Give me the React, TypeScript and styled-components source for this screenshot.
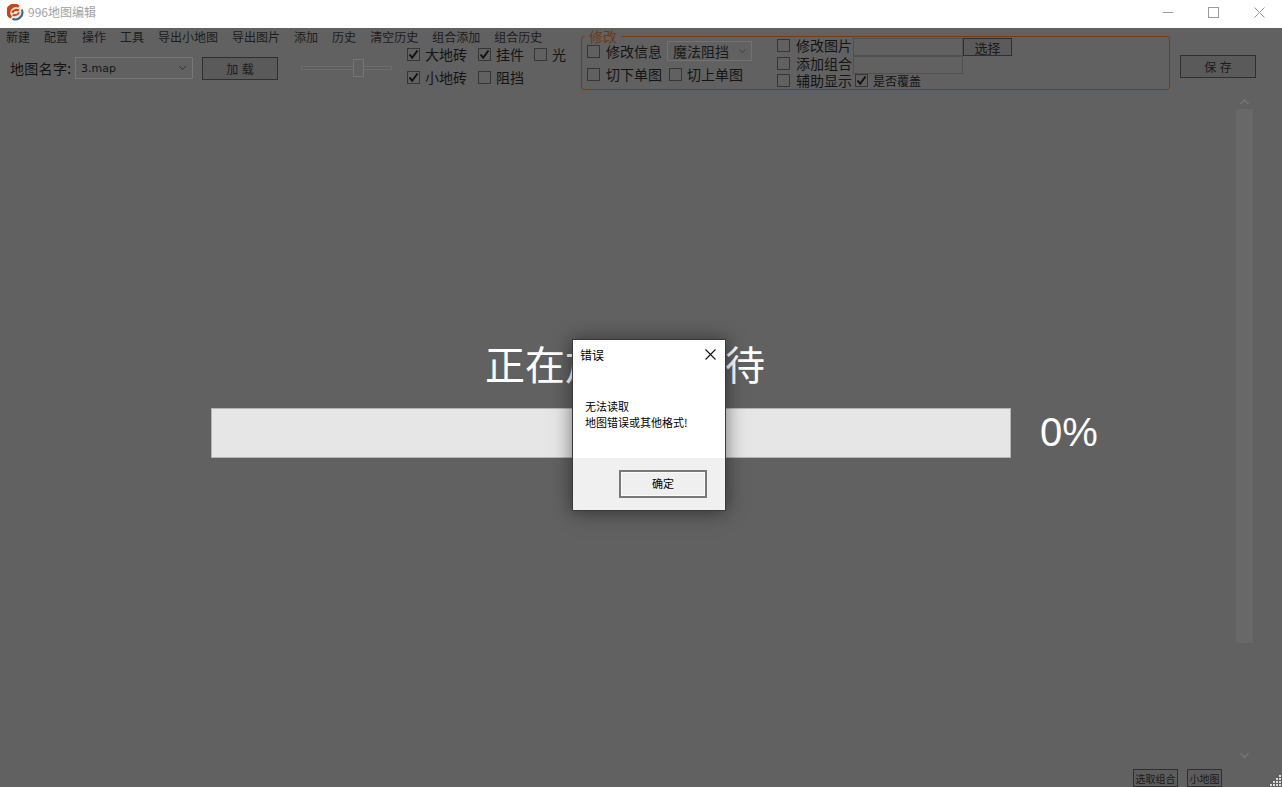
import React from 'react'
import styled, { createGlobalStyle } from 'styled-components'

const GlobalStyle = createGlobalStyle`
html, body {
  margin: 0;
  padding: 0;
  height: 100%;
  overflow: hidden;
}
body {
  font-family: "Noto Sans CJK SC", "Liberation Sans", sans-serif;
  background: #616161;
}
* { box-sizing: border-box; }
`

const menuItems = ['新建', '配置', '操作', '工具', '导出小地图', '导出图片', '添加', '历史', '清空历史', '组合添加', '组合历史']

const Check: React.FC<{ checked?: boolean }> = ({ checked }) => (
  <CheckBox>
    {checked && (
      <svg width="11" height="11" viewBox="0 0 11 11">
        <path d="M1.5 5.5 L4.2 8.7 L9.5 1.5" fill="none" stroke="#111" strokeWidth="1.9" />
      </svg>
    )}
  </CheckBox>
)

const Chevron: React.FC<{ up?: boolean; color?: string; w?: number }> = ({ up, color = '#2c2c2c', w = 7 }) => (
  <svg width={w} height={w * 0.6} viewBox="0 0 10 6" style={{ display: 'block' }}>
    <path d={up ? 'M0.5 5.5 L5 1 L9.5 5.5' : 'M0.5 0.5 L5 5 L9.5 0.5'} fill="none" stroke={color} strokeWidth="1.3" />
  </svg>
)

const App: React.FC = () => {
  return (
    <Page>
      <GlobalStyle />
      <TitleBar>
        <svg width="17" height="17" viewBox="0 0 17 17">
          <circle cx="8.5" cy="8.5" r="8" fill="#f4e6dc" />
          <path d="M12.5 1.6 A8 8 0 1 0 3.4 14.6 L5 12.6 A5.6 5.6 0 0 1 11.4 3.6 Z" fill="#c6451c" />
          <path d="M15.6 5 A8 8 0 0 1 5 15.7 L6 14 A6.2 6.2 0 0 0 14 6 Z" fill="#2f6c96" />
          <path d="M4.2 8.2 C5.2 5.4 9 4 12.6 5.4 L11 7.4 L9.2 7 C7.8 7 7 7.8 6.6 9 Z" fill="#c9481e" />
          <path d="M12.8 8.6 C12 11.6 8.4 13 5 11.6 L6.6 9.8 L8.4 10.2 C9.6 10.2 10.4 9.4 10.8 8.2 Z" fill="#c9481e" />
        </svg>
        <AppTitle>996地图编辑</AppTitle>
        <WindowButtons>
          <svg width="10" height="11" viewBox="0 0 10 11">
            <path d="M0 5.5 H10" stroke="#9a9a9a" strokeWidth="1" />
          </svg>
          <svg width="11" height="11" viewBox="0 0 11 11">
            <rect x="0.5" y="0.5" width="10" height="10" fill="none" stroke="#9a9a9a" />
          </svg>
          <svg width="11" height="11" viewBox="0 0 11 11">
            <path d="M0.5 0.5 L10.5 10.5 M10.5 0.5 L0.5 10.5" stroke="#9a9a9a" />
          </svg>
        </WindowButtons>
      </TitleBar>

      <Workspace>
        <Toolbar>
          <LeftPanel>
            <MenuBar>
              {menuItems.map((item) => (
                <MenuItem key={item}>{item}</MenuItem>
              ))}
            </MenuBar>
            <Controls>
              <FieldLabel>地图名字:</FieldLabel>
              <MapSelect>
                <span>3.map</span>
                <Chevron />
              </MapSelect>
              <LoadButton>加 载</LoadButton>
              <Slider>
                <SliderThumb />
              </Slider>
              <LayerGrid>
                <LayerItem><Check checked /><LayerLabel>大地砖</LayerLabel></LayerItem>
                <LayerItem><Check checked /><LayerLabel>挂件</LayerLabel></LayerItem>
                <LayerItem><Check /><LayerLabel>光</LayerLabel></LayerItem>
                <LayerItem><Check checked /><LayerLabel>小地砖</LayerLabel></LayerItem>
                <LayerItem><Check /><LayerLabel>阻挡</LayerLabel></LayerItem>
              </LayerGrid>
            </Controls>
          </LeftPanel>

          <GroupBox>
            <Legend>修改</Legend>
            <InfoColumn>
              <CheckRow>
                <Check />
                <InfoLabel>修改信息</InfoLabel>
                <BlockSelect>
                  <span>魔法阻挡</span>
                  <Chevron color="#3c3c3c" />
                </BlockSelect>
              </CheckRow>
              <CheckRow>
                <Check />
                <InfoLabel>切下单图</InfoLabel>
                <SecondCheck>
                  <Check />
                  <Label>切上单图</Label>
                </SecondCheck>
              </CheckRow>
            </InfoColumn>
            <ImageColumn>
              <ImageRow>
                <Check />
                <ImageLabel>修改图片</ImageLabel>
                <PathInput />
                <PickButton>选择</PickButton>
              </ImageRow>
              <ImageRow>
                <Check />
                <ImageLabel>添加组合</ImageLabel>
                <PathInput />
              </ImageRow>
              <ImageRow>
                <Check />
                <ImageLabel>辅助显示</ImageLabel>
                <OverlapCheck>
                  <Check checked />
                  <SmallLabel>是否覆盖</SmallLabel>
                </OverlapCheck>
              </ImageRow>
            </ImageColumn>
          </GroupBox>

          <SaveButton>保 存</SaveButton>
        </Toolbar>

        <Canvas>
          <LoadingArea>
            <LoadingTitle>正在加载请等待</LoadingTitle>
            <ProgressRow>
              <ProgressBar />
              <Percent>0%</Percent>
            </ProgressRow>
          </LoadingArea>
          <ScrollBar>
            <Chevron up color="#7a7a7a" w={9} />
            <ScrollTrack />
            <BottomArrow>
              <Chevron color="#7a7a7a" w={9} />
            </BottomArrow>
          </ScrollBar>
        </Canvas>

        <Footer>
          <FooterButton>选取组合</FooterButton>
          <FooterButton>小地图</FooterButton>
        </Footer>

        <Grip>
          <svg width="14" height="12" viewBox="0 0 14 12">
            {[[11, 0], [8, 3], [11, 3], [5, 6], [8, 6], [11, 6], [2, 9], [5, 9], [8, 9], [11, 9]].map(([x, y]) => (
              <rect key={`${x}-${y}`} x={x} y={y} width="2" height="2" fill="#d8d8d8" />
            ))}
          </svg>
        </Grip>
      </Workspace>

      <Dialog>
        <DialogHead>
          <span>错误</span>
          <svg width="11" height="11" viewBox="0 0 11 11">
            <path d="M0.5 0.5 L10.5 10.5 M10.5 0.5 L0.5 10.5" stroke="#111" strokeWidth="1.1" />
          </svg>
        </DialogHead>
        <DialogBody>
          <div>无法读取</div>
          <div>地图错误或其他格式!</div>
        </DialogBody>
        <DialogFoot>
          <OkButton>确定</OkButton>
        </DialogFoot>
      </Dialog>
    </Page>
  )
}

export default App

const Page = styled.div`
position: relative;
width: 1282px;
height: 787px;
display: flex;
flex-direction: column;
overflow: hidden;
`

const TitleBar = styled.div`
height: 28px;
flex: none;
background: #fff;
display: flex;
align-items: center;
padding: 0 17px 4px 7px;
`

const AppTitle = styled.div`
margin-left: 4px;
font-size: 12px;
color: #a3a3a3;
line-height: 16px;
`

const WindowButtons = styled.div`
margin-left: auto;
display: flex;
align-items: center;
gap: 35px;
`

const Workspace = styled.div`
position: relative;
flex: 1;
min-height: 0;
display: flex;
flex-direction: column;
background: #616161;
color: #141414;
`

const Toolbar = styled.div`
flex: none;
height: 62px;
display: flex;
`

const LeftPanel = styled.div`
width: 581px;
flex: none;
`

const MenuBar = styled.div`
height: 18px;
padding-left: 6px;
display: flex;
gap: 14px;
align-items: center;
`

const MenuItem = styled.div`
font-size: 12px;
line-height: 16px;
color: #1c1c1c;
`

const Controls = styled.div`
height: 40px;
margin-top: 2px;
padding-left: 10px;
display: flex;
align-items: center;
`

const FieldLabel = styled.div`
width: 65px;
font-size: 14px;
line-height: 18px;
letter-spacing: 0.3px;
white-space: nowrap;
`

const MapSelect = styled.div`
width: 118px;
height: 22px;
border: 1px solid #777;
padding: 0 6px 0 5px;
display: flex;
align-items: center;
justify-content: space-between;
font-family: "DejaVu Sans", sans-serif;
font-size: 11px;
color: #161616;
`

const LoadButton = styled.div`
width: 76px;
height: 23px;
margin-left: 9px;
border: 1px solid #2f2f2f;
background: #5a5a5a;
display: flex;
align-items: center;
justify-content: center;
font-size: 12px;
word-spacing: 1px;
color: #1a1a1a;
`

const Slider = styled.div`
position: relative;
width: 91px;
height: 4px;
margin-left: 23px;
border: 1px solid #6d6d6d;
background: #5e5e5e;
`

const SliderThumb = styled.div`
position: absolute;
left: 51px;
top: -8px;
width: 11px;
height: 18px;
border: 1px solid #757575;
background: #616161;
`

const LayerGrid = styled.div`
align-self: flex-start;
margin-left: 15px;
display: grid;
grid-template-columns: 71px 56px auto;
grid-auto-rows: 13px;
row-gap: 10px;
`

const LayerItem = styled.div`
display: flex;
align-items: center;
height: 13px;
`

const CheckRow = styled.div`
display: flex;
align-items: center;
height: 20px;
`

const CheckBox = styled.div`
width: 13px;
height: 13px;
flex: none;
border: 1px solid #363636;
display: flex;
align-items: center;
justify-content: center;
`

const Label = styled.div`
margin-left: 5px;
font-size: 14px;
line-height: 18px;
white-space: nowrap;
`

const LayerLabel = styled(Label)`
margin-top: -1px;
`

const InfoLabel = styled(Label)`
margin-left: 6px;
`

const ImageLabel = styled(Label)`
margin-left: 6px;
margin-top: -2px;
`

const SmallLabel = styled.div`
margin-left: 5px;
font-size: 12px;
line-height: 14px;
white-space: nowrap;
`

const GroupBox = styled.div`
position: relative;
width: 589px;
height: 54px;
margin-top: 8px;
flex: none;
border: 1px solid #7d3810;
border-radius: 3px;
padding-left: 5px;
display: flex;
`

const Legend = styled.div`
position: absolute;
left: 3px;
top: -9px;
padding: 0 4px;
background: #616161;
color: #6e3a16;
font-size: 14px;
line-height: 16px;
`

const InfoColumn = styled.div`
width: 190px;
flex: none;
padding-top: 4px;
display: flex;
flex-direction: column;
gap: 3px;
`

const BlockSelect = styled.div`
width: 85px;
height: 20px;
margin-left: 5px;
border: 1px solid #727272;
padding: 0 5px;
display: flex;
align-items: center;
justify-content: space-between;
font-size: 14px;
color: #191919;
`

const SecondCheck = styled.div`
margin-left: 7px;
display: flex;
align-items: center;
`

const ImageColumn = styled.div`
display: flex;
flex-direction: column;
padding-top: 1px;
`

const ImageRow = styled.div`
display: flex;
align-items: flex-start;
height: 18px;
&:nth-child(2) { height: 17px; }
& > ${CheckBox} { margin-top: 1px; }
`

const PathInput = styled.div`
width: 110px;
height: 18px;
margin-left: 1px;
border: 1px solid #505050;
`

const PickButton = styled.div`
width: 49px;
height: 18px;
border: 1px solid #2f2f2f;
background: #5b5b5b;
display: flex;
align-items: center;
justify-content: center;
font-size: 13px;
color: #1a1a1a;
`

const OverlapCheck = styled.div`
margin-left: 3px;
margin-top: 1px;
display: flex;
align-items: flex-start;
`

const SaveButton = styled.div`
width: 76px;
height: 23px;
margin: 27px 0 0 10px;
border: 1px solid #2f2f2f;
background: #5a5a5a;
display: flex;
align-items: center;
justify-content: center;
font-size: 12px;
word-spacing: 1px;
color: #1a1a1a;
`

const Canvas = styled.div`
flex: 1;
min-height: 0;
display: flex;
`

const LoadingArea = styled.div`
flex: 1;
padding-top: 249px;
`

const LoadingTitle = styled.div`
margin-left: 485px;
font-size: 40px;
line-height: 48px;
color: #fff;
white-space: nowrap;
`

const ProgressRow = styled.div`
margin: 21px 0 0 211px;
display: flex;
align-items: center;
`

const ProgressBar = styled.div`
width: 800px;
height: 50px;
background: #e6e6e6;
border: 1px solid #b5b5b5;
`

const Percent = styled.div`
margin-left: 29px;
margin-bottom: 2px;
font-family: "Liberation Sans", sans-serif;
font-size: 40px;
line-height: 48px;
color: #fff;
`

const ScrollBar = styled.div`
width: 17px;
margin-right: 29px;
padding-top: 9px;
flex: none;
display: flex;
flex-direction: column;
align-items: center;
`

const ScrollTrack = styled.div`
width: 17px;
height: 534px;
margin-top: 5px;
flex: none;
background: #686868;
`

const BottomArrow = styled.div`
margin-top: auto;
margin-bottom: 11px;
`

const Footer = styled.div`
flex: none;
height: 18px;
padding-right: 60px;
display: flex;
justify-content: flex-end;
gap: 9px;
`

const FooterButton = styled.div`
padding: 0 1.5px;
height: 18px;
border: 1px solid #2f2f2f;
background: #5c5c5c;
display: flex;
align-items: center;
font-size: 10px;
color: #1a1a1a;
white-space: nowrap;
`

const Grip = styled.div`
position: absolute;
right: 0;
bottom: 0;
height: 12px;
line-height: 0;
`

const Dialog = styled.div`
position: absolute;
left: 572px;
top: 339px;
width: 154px;
height: 172px;
background: #fff;
border: 1px solid #3a3a3a;
box-shadow: 0 1px 18px rgba(0, 0, 0, 0.5);
display: flex;
flex-direction: column;
color: #000;
`

const DialogHead = styled.div`
height: 28px;
flex: none;
padding: 0 9px 0 7px;
display: flex;
align-items: center;
justify-content: space-between;
font-size: 12px;
`

const DialogBody = styled.div`
flex: 1;
padding: 30px 0 0 12px;
font-size: 11px;
line-height: 16px;
white-space: nowrap;
`

const DialogFoot = styled.div`
height: 52px;
flex: none;
background: #f0f0f0;
padding: 12px 0 0 46px;
`

const OkButton = styled.div`
width: 88px;
height: 28px;
border: 2px solid #787878;
background: #efefef;
box-shadow: inset 0 0 0 1px #fbfbfb;
padding-bottom: 2px;
display: flex;
align-items: center;
justify-content: center;
font-size: 11px;
`
